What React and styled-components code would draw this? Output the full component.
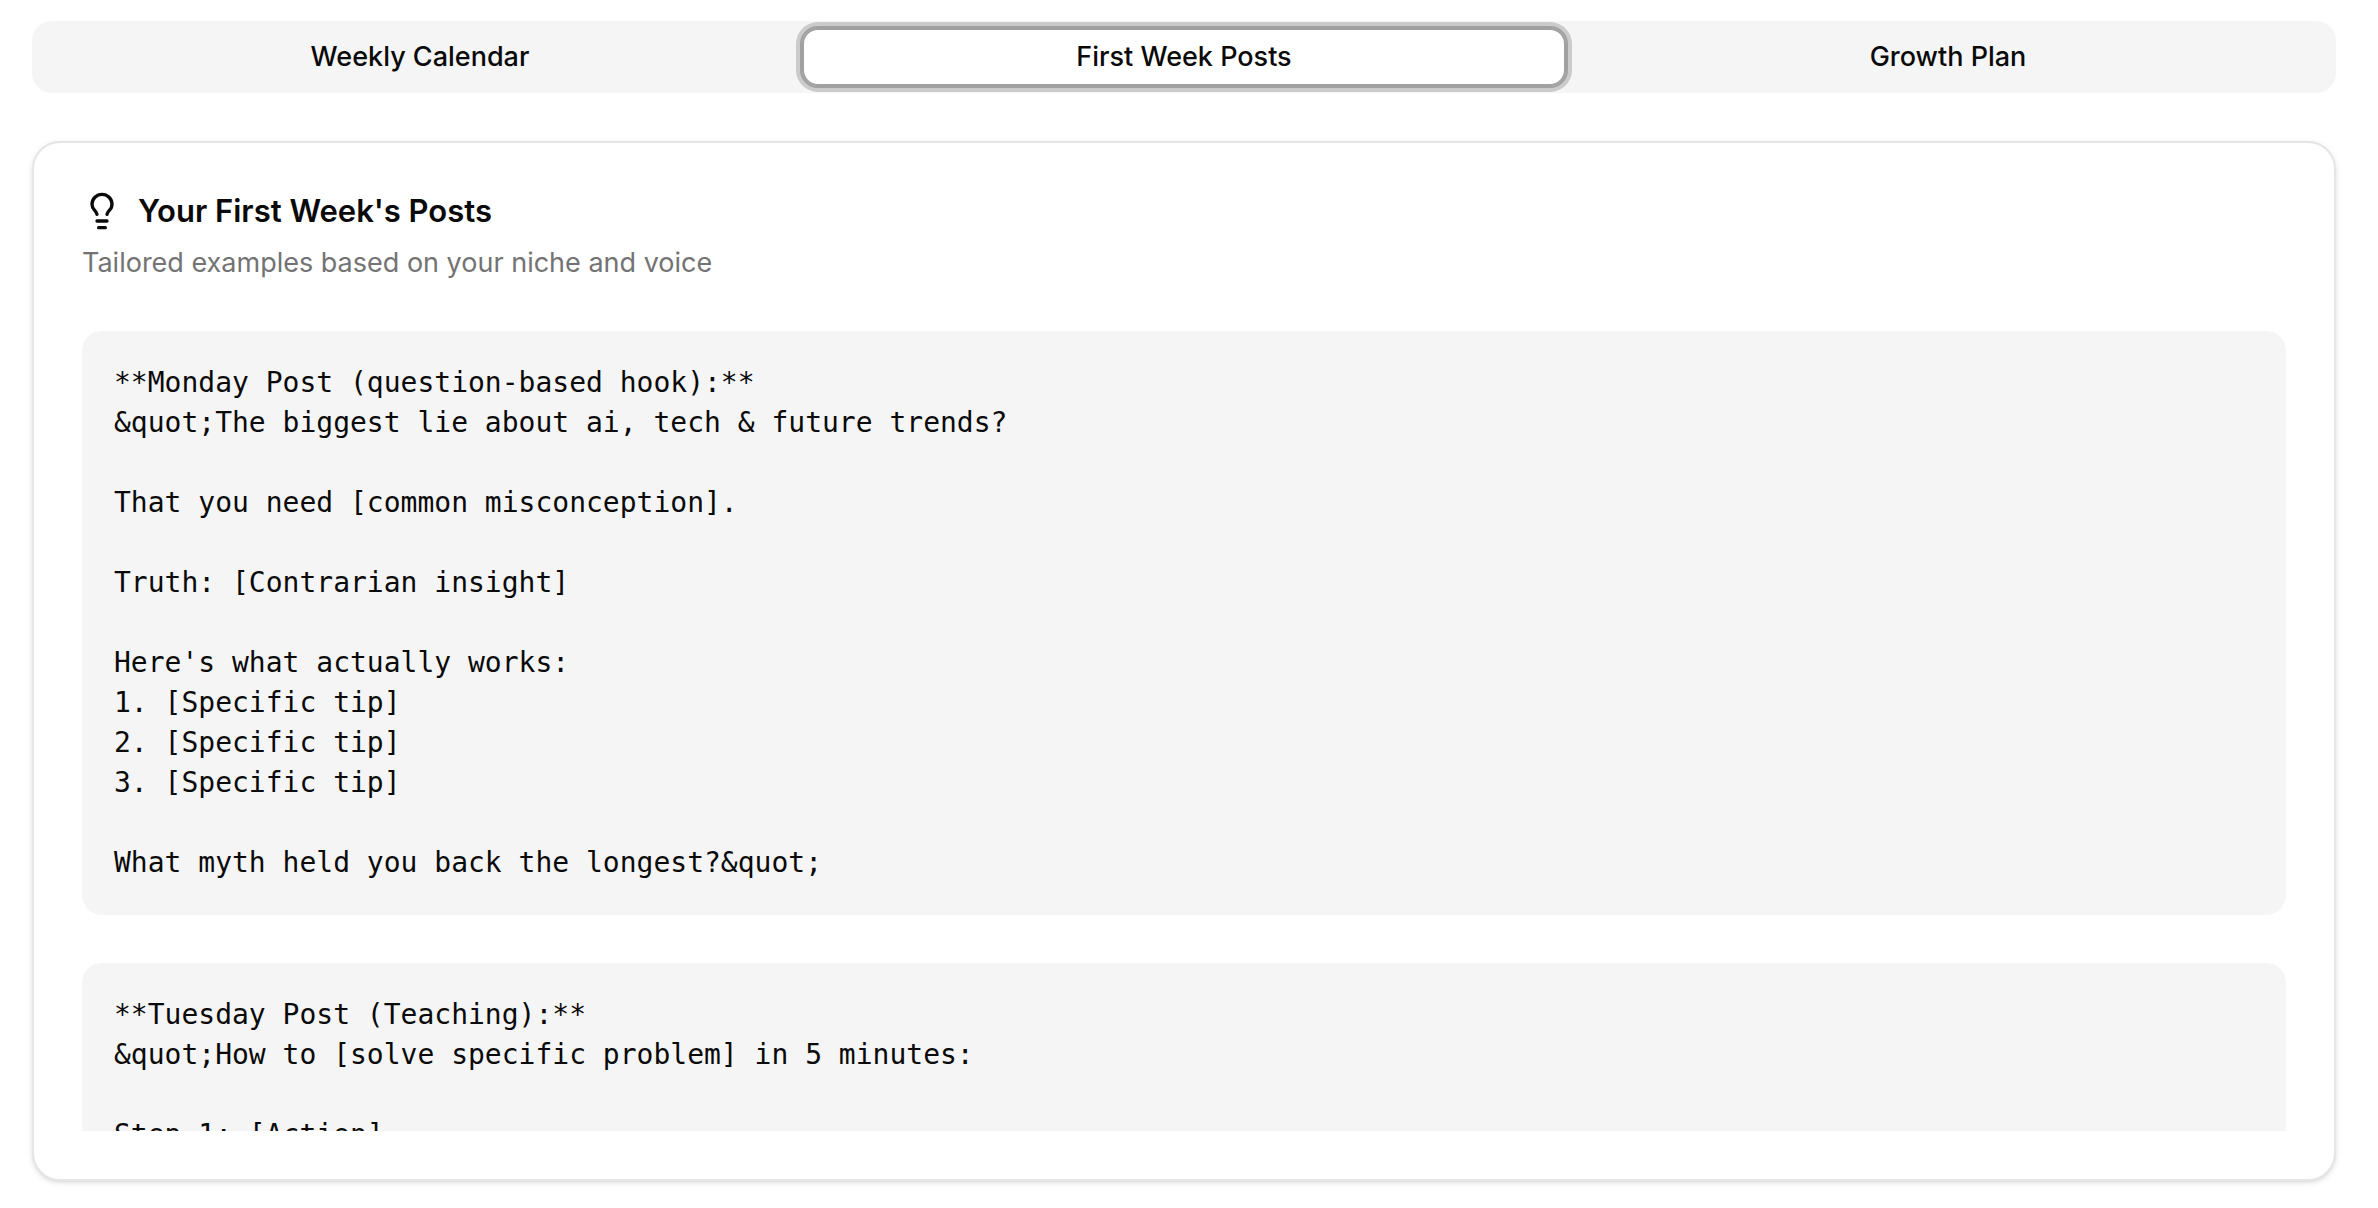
import React, { useState } from "react";
import styled, { createGlobalStyle } from "styled-components";
import { Lightbulb } from "lucide-react";

const GlobalStyle = createGlobalStyle`
  *, *::before, *::after { box-sizing: border-box; }
  body {
    margin: 0;
    background: #ffffff;
    color: #0a0a0a;
    font-family: Inter, "Liberation Sans", sans-serif;
    font-size: 27px;
    line-height: 40px;
  }
`;

const Page = styled.main`
  display: flex;
  flex-direction: column;
  gap: 48px;
  padding: 21px 42px 27px 32px;
`;

const TabList = styled.div`
  display: grid;
  grid-template-columns: repeat(3, 1fr);
  align-items: center;
  height: 72px;
  padding: 6px;
  border-radius: 20px;
  background: #f5f5f5;
`;

const Tab = styled.button`
  height: 58px;
  padding: 0 16px;
  border: 2px solid transparent;
  border-radius: 16px;
  background: transparent;
  color: inherit;
  font: inherit;
  font-weight: 500;
  cursor: pointer;

  &:focus {
    outline: none;
  }

  &[aria-selected="true"] {
    border-color: #a1a1a1;
    background: #ffffff;
    outline: 2px solid #a1a1a1;
    box-shadow: 0 0 0 6px rgba(161, 161, 161, 0.5);
  }
`;

const Card = styled.section`
  display: flex;
  flex-direction: column;
  gap: 48px;
  padding: 48px;
  border: 2px solid #e5e5e5;
  border-radius: 28px;
  background: #ffffff;
  box-shadow: 0 2px 6px rgba(0, 0, 0, 0.1), 0 2px 4px -2px rgba(0, 0, 0, 0.1);
`;

const CardHeader = styled.header`
  display: flex;
  flex-direction: column;
  gap: 12px;
`;

const CardTitle = styled.h2`
  display: flex;
  align-items: center;
  gap: 16px;
  margin: 0;
  font-size: 31px;
  font-weight: 600;
  line-height: 40px;
`;

const CardDescription = styled.p`
  margin: 0;
  color: #737373;
`;

const ScrollArea = styled.div`
  display: flex;
  flex-direction: column;
  gap: 48px;
  max-height: 800px;
  overflow-y: auto;
  scrollbar-width: none;
`;

const Post = styled.pre`
  flex: none;
  margin: 0;
  padding: 32px;
  border-radius: 20px;
  background: #f5f5f5;
  font-family: "DejaVu Sans Mono", "Liberation Mono", monospace;
  font-size: 28px;
  line-height: 40px;
  white-space: pre-wrap;
`;

const tabs = ["Weekly Calendar", "First Week Posts", "Growth Plan"];

const posts = [
  `**Monday Post (question-based hook):**
&quot;The biggest lie about ai, tech & future trends?

That you need [common misconception].

Truth: [Contrarian insight]

Here's what actually works:
1. [Specific tip]
2. [Specific tip]
3. [Specific tip]

What myth held you back the longest?&quot;`,
  `**Tuesday Post (Teaching):**
&quot;How to [solve specific problem] in 5 minutes:

Step 1: [Action]`,
];

export default function App() {
  const [active, setActive] = useState("First Week Posts");

  return (
    <>
      <GlobalStyle />
      <Page>
        <TabList role="tablist">
          {tabs.map((tab) => (
            <Tab
              key={tab}
              type="button"
              role="tab"
              aria-selected={tab === active}
              onClick={() => setActive(tab)}
            >
              {tab}
            </Tab>
          ))}
        </TabList>
        <Card>
          <CardHeader>
            <CardTitle>
              <Lightbulb size={40} aria-hidden="true" />
              Your First Week's Posts
            </CardTitle>
            <CardDescription>
              Tailored examples based on your niche and voice
            </CardDescription>
          </CardHeader>
          <ScrollArea>
            {posts.map((post) => (
              <Post key={post}>{post}</Post>
            ))}
          </ScrollArea>
        </Card>
      </Page>
    </>
  );
}
